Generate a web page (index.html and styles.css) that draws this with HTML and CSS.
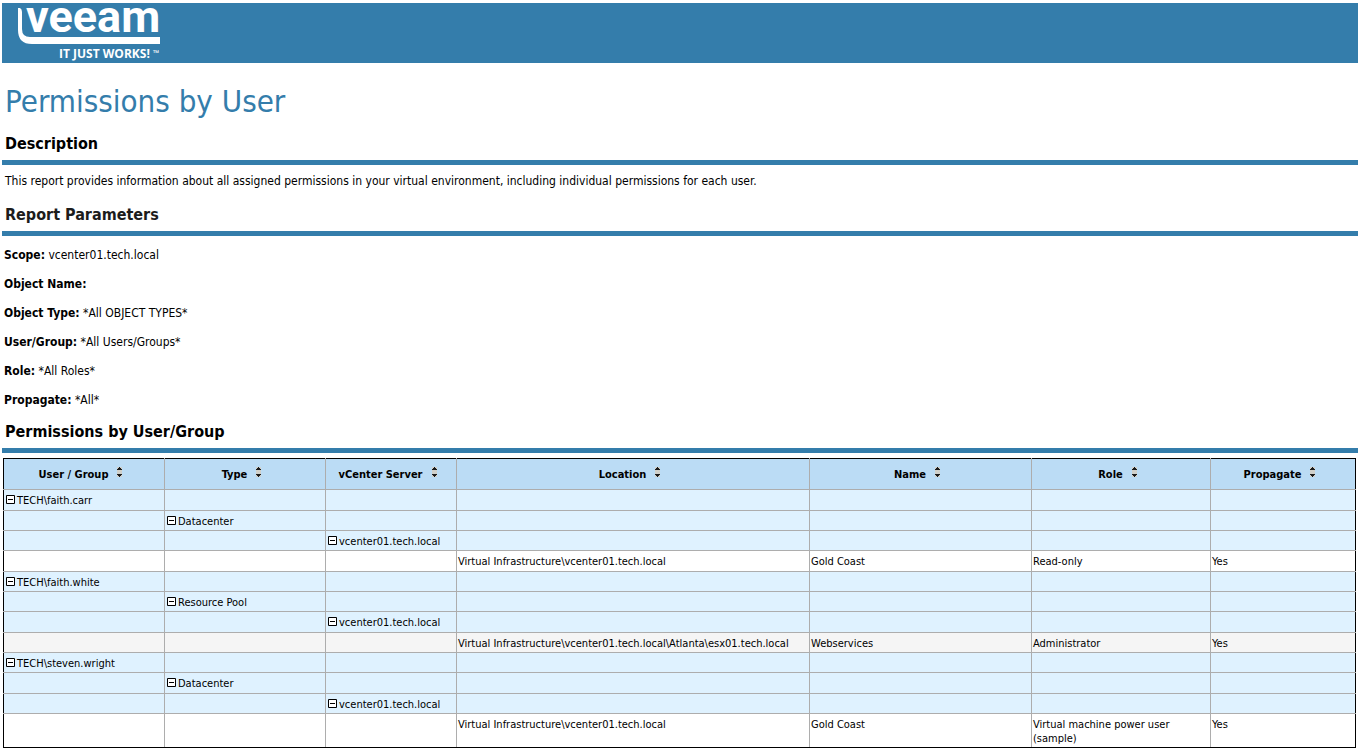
FILE: index.html
```html
<!DOCTYPE html>
<html lang="en">
<head>
  <meta charset="UTF-8" />
  <meta name="viewport" content="width=device-width, initial-scale=1.0"/>
  <title>Permissions by User</title>
  <link rel="stylesheet" href="styles.css">
</head>
<body>
  <svg width="0" height="0" class="defs">
    <symbol id="sort" viewBox="0 0 7 12">
      <rect x="1" y="1" width="5" height="10" fill="#d0d0ca"/>
      <path d="M3 1h1v1h1v1h1v1H1V3h1V2h1z M1 8h5v1H5v1H4v1H3v-1H2V9H1z" fill="#1a1a1a"/>
    </symbol>
    <symbol id="minus" viewBox="0 0 9 9">
      <path d="M.5.5h8v8h-8z" fill="#fff" stroke="#000"/>
      <path d="M2 4h5v1H2z"/>
    </symbol>
  </svg>

  <header class="banner">
    <svg class="logo" width="160" height="60" viewBox="0 0 160 60" role="img" aria-label="Veeam - It just works!">
      <path d="M16 5h2q2 1 2 4v17q0 8 8 8h130v7H30Q16 41 16 27z" fill="#fff"/>
      <text class="logo-name" x="24" y="29">veeam</text>
      <text class="logo-tagline" x="57" y="55">IT JUST WORKS!</text>
      <text class="logo-tm" x="151" y="53">™</text>
    </svg>
  </header>

  <main>
    <h1>Permissions by User</h1>

    <h2>Description</h2>
    <p class="description">This report provides information about all assigned permissions in your virtual environment, including individual permissions for each user.</p>

    <h2 class="soft">Report Parameters</h2>
    <dl class="params">
      <div><dt>Scope:</dt> <dd>vcenter01.tech.local</dd></div>
      <div><dt>Object Name:</dt> <dd></dd></div>
      <div><dt>Object Type:</dt> <dd>*All OBJECT TYPES*</dd></div>
      <div><dt>User/Group:</dt> <dd>*All Users/Groups*</dd></div>
      <div><dt>Role:</dt> <dd>*All Roles*</dd></div>
      <div><dt>Propagate:</dt> <dd>*All*</dd></div>
    </dl>

    <h2>Permissions by User/Group</h2>
    <table class="report">
      <colgroup>
        <col class="col-user"><col class="col-type"><col class="col-server"><col>
        <col class="col-name"><col class="col-role"><col class="col-propagate">
      </colgroup>
      <thead>
        <tr>
          <th>User / Group<button class="sort" aria-label="Sort by user"><svg width="7" height="12"><use href="#sort"/></svg></button></th>
          <th>Type<button class="sort" aria-label="Sort by type"><svg width="7" height="12"><use href="#sort"/></svg></button></th>
          <th>vCenter Server<button class="sort" aria-label="Sort by server"><svg width="7" height="12"><use href="#sort"/></svg></button></th>
          <th>Location<button class="sort" aria-label="Sort by location"><svg width="7" height="12"><use href="#sort"/></svg></button></th>
          <th>Name<button class="sort" aria-label="Sort by name"><svg width="7" height="12"><use href="#sort"/></svg></button></th>
          <th>Role<button class="sort" aria-label="Sort by role"><svg width="7" height="12"><use href="#sort"/></svg></button></th>
          <th>Propagate<button class="sort" aria-label="Sort by propagate"><svg width="7" height="12"><use href="#sort"/></svg></button></th>
        </tr>
      </thead>
      <tbody>
        <tr class="group"><td><button class="toggle" aria-label="Collapse"><svg width="9" height="9"><use href="#minus"/></svg></button>TECH\faith.carr</td><td></td><td></td><td></td><td></td><td></td><td></td></tr>
        <tr class="group"><td></td><td><button class="toggle" aria-label="Collapse"><svg width="9" height="9"><use href="#minus"/></svg></button>Datacenter</td><td></td><td></td><td></td><td></td><td></td></tr>
        <tr class="group"><td></td><td></td><td><button class="toggle" aria-label="Collapse"><svg width="9" height="9"><use href="#minus"/></svg></button>vcenter01.tech.local</td><td></td><td></td><td></td><td></td></tr>
        <tr><td></td><td></td><td></td><td>Virtual Infrastructure\vcenter01.tech.local</td><td>Gold Coast</td><td>Read-only</td><td>Yes</td></tr>

        <tr class="group"><td><button class="toggle" aria-label="Collapse"><svg width="9" height="9"><use href="#minus"/></svg></button>TECH\faith.white</td><td></td><td></td><td></td><td></td><td></td><td></td></tr>
        <tr class="group"><td></td><td><button class="toggle" aria-label="Collapse"><svg width="9" height="9"><use href="#minus"/></svg></button>Resource Pool</td><td></td><td></td><td></td><td></td><td></td></tr>
        <tr class="group"><td></td><td></td><td><button class="toggle" aria-label="Collapse"><svg width="9" height="9"><use href="#minus"/></svg></button>vcenter01.tech.local</td><td></td><td></td><td></td><td></td></tr>
        <tr class="alt"><td></td><td></td><td></td><td>Virtual Infrastructure\vcenter01.tech.local\Atlanta\esx01.tech.local</td><td>Webservices</td><td>Administrator</td><td>Yes</td></tr>

        <tr class="group"><td><button class="toggle" aria-label="Collapse"><svg width="9" height="9"><use href="#minus"/></svg></button>TECH\steven.wright</td><td></td><td></td><td></td><td></td><td></td><td></td></tr>
        <tr class="group"><td></td><td><button class="toggle" aria-label="Collapse"><svg width="9" height="9"><use href="#minus"/></svg></button>Datacenter</td><td></td><td></td><td></td><td></td><td></td></tr>
        <tr class="group"><td></td><td></td><td><button class="toggle" aria-label="Collapse"><svg width="9" height="9"><use href="#minus"/></svg></button>vcenter01.tech.local</td><td></td><td></td><td></td><td></td></tr>
        <tr><td></td><td></td><td></td><td>Virtual Infrastructure\vcenter01.tech.local</td><td>Gold Coast</td><td>Virtual machine power user<br>(sample)</td><td>Yes</td></tr>
      </tbody>
    </table>
  </main>
</body>
</html>
```

FILE: styles.css
```css
body {
  margin: 0;
  padding: 3px 5px 0 2px;
  font-family: Tahoma, 'DejaVu Sans Condensed', 'Noto Sans', sans-serif;
  font-size: 12px;
  line-height: 16px;
  color: #000;
  background: #fff;
}

.defs {
  position: absolute;
}

.banner {
  height: 60px;
  background: #347dab;
}

.logo {
  display: block;
}

.logo text {
  font-family: 'Open Sans', sans-serif;
  font-weight: bold;
  fill: #fff;
}

.logo .logo-name {
  font-family: Roboto, sans-serif;
  font-size: 45px;
}

.logo .logo-tagline {
  font-size: 12px;
}

.logo .logo-tm {
  font-size: 8px;
}

h1 {
  margin: 0;
  padding: 20px 3px 13px;
  font-size: 31px;
  line-height: 36px;
  font-weight: normal;
  color: #347dab;
}

h2 {
  margin: 0;
  padding: 1px 3px 5px;
  font-size: 16px;
  line-height: 22px;
  border-bottom: 5px solid #347dab;
}

h2.soft {
  color: #1c1c1c;
}

.description {
  margin: 0;
  padding: 8px 3px 14px;
}

.params {
  display: flex;
  flex-direction: column;
  gap: 13px;
  margin: 0;
  padding: 11px 2px 12px;
}

.params dt,
.params dd {
  display: inline;
  margin: 0;
}

.params dt {
  font-weight: bold;
}

.report {
  width: calc(100% - 3px);
  margin: 5px 1px 0;
  table-layout: fixed;
  border-collapse: collapse;
  border: 1px solid #000;
  font-size: 11px;
  line-height: 14px;
}

.col-user, .col-type { width: 161px; }
.col-server { width: 131px; }
.col-name { width: 222px; }
.col-role { width: 179px; }
.col-propagate { width: 145px; }

.report th,
.report td {
  border: 1px solid #adadad;
  box-sizing: border-box;
}

/* keep the black frame on the outer edges */
.report th { border-top-color: #000; }
.report th:first-child, .report td:first-child { border-left-color: #000; }
.report th:last-child, .report td:last-child { border-right-color: #000; }
.report tbody tr:last-child td { border-bottom-color: #000; }

.report th {
  height: 31px;
  padding: 0 6px 0 0;
  background: #bbdcf5;
}

.report td {
  height: 20px;
  padding: 4px 2px 1px 1px;
  vertical-align: top;
  white-space: nowrap;
}

.report tbody tr:nth-child(3n+1) td {
  height: 21px;
}

.report tbody tr:last-child td {
  height: 34px;
}

.group td {
  background: #dff2ff;
}

.alt td {
  background: #f5f5f5;
}

.sort,
.toggle {
  padding: 0;
  border: 0;
  background: none;
  cursor: pointer;
}

.sort {
  margin-left: 8px;
  height: 12px;
}

.toggle {
  margin: 0 2px 0 1px;
  height: 9px;
}

.sort svg,
.toggle svg {
  display: block;
}
```
